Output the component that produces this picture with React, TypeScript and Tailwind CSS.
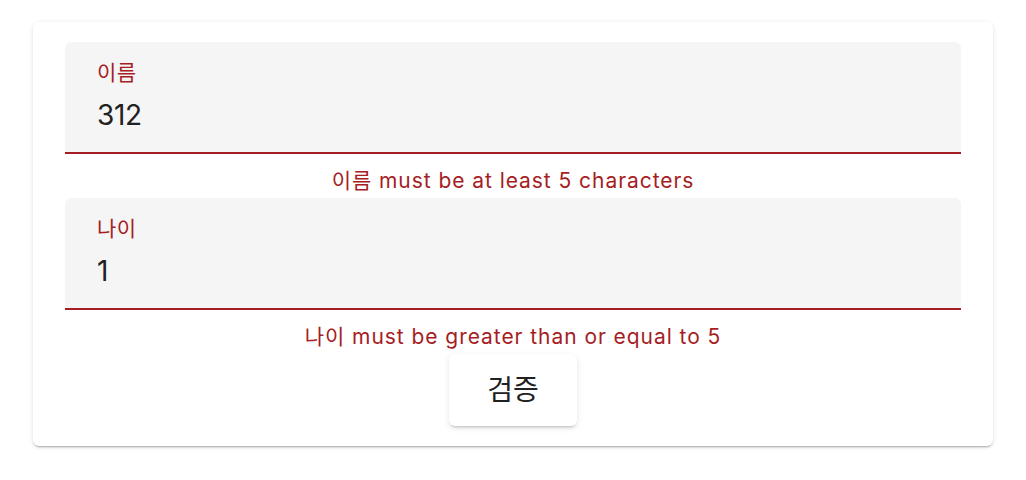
const font = { fontFamily: 'Inter, "Noto Sans CJK KR", sans-serif' }

function Field({ label, value, error }: { label: string; value: string; error: string }) {
  return (
    <div className="flex flex-col">
      <div className="flex h-[112px] flex-col rounded-t-[6px] border-b-2 border-[#a61d24] bg-[#f5f5f5] px-8 pt-[17px]">
        <span className="text-[21px] leading-[28px] tracking-[0.02em] text-[#a61d24]">{label}</span>
        <span className="mt-[10px] text-[28px] leading-[36px] tracking-[-0.01em] text-[#212121]">{value}</span>
      </div>
      <div className="flex h-[44px] items-center justify-center pt-[10px] text-[21px] tracking-[0.045em] text-[#a61d24]">
        {error}
      </div>
    </div>
  )
}

export default function App() {
  return (
    <div className="min-h-[480px] bg-white pt-[22px] pl-[33px]" style={font}>
      <div className="flex w-[960px] flex-col rounded-[6px] bg-white px-8 pt-5 pb-5 shadow-[0_2px_2px_-1px_rgba(0,0,0,0.3),0_1px_5px_0_rgba(0,0,0,0.1)]">
        <Field label="이름" value="312" error="이름 must be at least 5 characters" />
        <Field label="나이" value="1" error="나이 must be greater than or equal to 5" />
        <div className="flex justify-center">
          <button className="h-[72px] w-[128px] rounded-[6px] bg-white text-[28px] text-[#212121] shadow-[0_3px_3px_-2px_rgba(0,0,0,0.2),0_2px_6px_0_rgba(0,0,0,0.1)]">
            검증
          </button>
        </div>
      </div>
    </div>
  )
}
